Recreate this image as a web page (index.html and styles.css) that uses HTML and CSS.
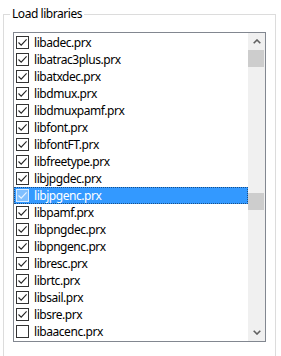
FILE: index.html
```html
<!DOCTYPE html>
<html lang="en">
<head>
  <meta charset="UTF-8" />
  <title>Load libraries</title>
  <link rel="stylesheet" href="styles.css">
</head>
<body>
  <div class="group">
    <span class="group-title">Load libraries</span>

    <div class="listbox">
      <ul class="items" id="items"></ul>

      <div class="scrollbar">
        <div class="sb-button">
          <svg width="8" height="5" viewBox="0 0 8 5"><path d="M0.7 4.3 L4 1 L7.3 4.3" fill="none" stroke="#606060" stroke-width="1.6"/></svg>
        </div>
        <div class="sb-track">
          <div class="sb-thumb first"></div>
          <div class="sb-thumb second"></div>
        </div>
        <div class="sb-button">
          <svg width="8" height="5" viewBox="0 0 8 5"><path d="M0.7 0.7 L4 4 L7.3 0.7" fill="none" stroke="#606060" stroke-width="1.6"/></svg>
        </div>
      </div>
    </div>
  </div>

  <script>
    const libs = [
      ["libadec.prx", true],
      ["libatrac3plus.prx", true],
      ["libatxdec.prx", true],
      ["libdmux.prx", true],
      ["libdmuxpamf.prx", true],
      ["libfont.prx", true],
      ["libfontFT.prx", true],
      ["libfreetype.prx", true],
      ["libjpgdec.prx", true],
      ["libjpgenc.prx", true],
      ["libpamf.prx", true],
      ["libpngdec.prx", true],
      ["libpngenc.prx", true],
      ["libresc.prx", true],
      ["librtc.prx", true],
      ["libsail.prx", true],
      ["libsre.prx", true],
      ["libaacenc.prx", false]
    ];
    const selected = "libjpgenc.prx";
    const check = '<svg width="11" height="11" viewBox="0 0 11 11"><path d="M1.5 5.5 L4.2 8.2 L9.6 2.4" fill="none" stroke-width="1.1"/></svg>';

    const list = document.getElementById("items");
    libs.forEach(([name, on]) => {
      const li = document.createElement("li");
      li.className = "item" + (name === selected ? " selected" : "");
      li.innerHTML = '<span class="box">' + (on ? check : "") + '</span><span class="label"></span>';
      li.querySelector(".label").textContent = name;
      list.appendChild(li);
    });
  </script>
</body>
</html>
```

FILE: styles.css
```css
* {
  margin: 0;
  padding: 0;
  box-sizing: border-box;
}

html, body {
  height: 100%;
  overflow: hidden;
  background: #fff;
  font-family: "Noto Sans", "Open Sans", sans-serif;
  font-size: 12px;
  letter-spacing: -0.45px;
  color: #000;
}

.group {
  position: relative;
  margin: 14px 5px 0 3px;
  height: 342px;
  border: 1px solid #dcdcdc;
  border-bottom: none;
  padding: 17px 0 0 9px;
}

.group-title {
  position: absolute;
  top: -9px;
  left: 6px;
  padding: 0 2px;
  background: #fff;
  line-height: 16px;
}

.listbox {
  display: flex;
  width: 253px;
  height: 310px;
  border: 1px solid #828790;
}

.items {
  list-style: none;
  flex: 1;
  padding-top: 1px;
}

.item {
  display: flex;
  align-items: center;
  gap: 5px;
  height: 17px;
  padding-left: 2px;
  white-space: nowrap;
}

.box {
  display: flex;
  align-items: center;
  justify-content: center;
  width: 13px;
  height: 13px;
  border: 1px solid #333;
  background: #fff;
}

.box svg path {
  stroke: #222;
}

.item.selected {
  background: #3399ff;
  color: #fff;
  outline: 1px dotted #1a4f88;
  outline-offset: -1px;
}

.item.selected .box {
  background: #7fbfff;
  border-color: #d9ecff;
}

.item.selected .box svg path {
  stroke: #eaf4ff;
}

.scrollbar {
  display: flex;
  flex-direction: column;
  width: 17px;
  background: #f0f0f0;
}

.sb-button {
  display: flex;
  align-items: center;
  justify-content: center;
  height: 17px;
}

.sb-track {
  flex: 1;
  display: flex;
  flex-direction: column;
}

.sb-thumb {
  height: 17px;
  margin-right: 1px;
  background: #cdcdcd;
}

.sb-thumb.second {
  margin-top: 126px;
}
```
